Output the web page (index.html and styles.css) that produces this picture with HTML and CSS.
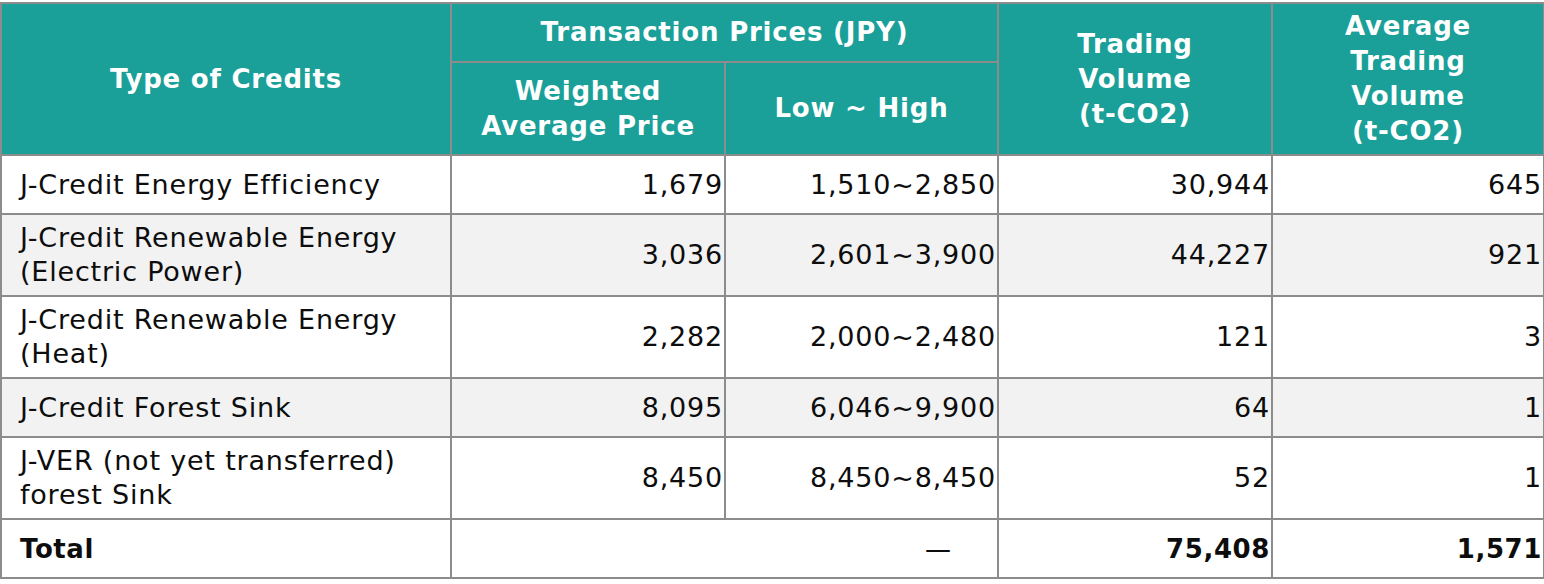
FILE: index.html
```html
<!DOCTYPE html>
<html>
<head>
<meta charset="utf-8">
<link rel="stylesheet" href="styles.css">
</head>
<body>
<table class="credits">
  <colgroup>
    <col class="c1"><col class="c2"><col class="c3"><col class="c4"><col class="c5">
  </colgroup>
  <thead>
    <tr class="h1">
      <th rowspan="2">Type of Credits</th>
      <th colspan="2">Transaction Prices (JPY)</th>
      <th rowspan="2">Trading<br>Volume<br>(t-CO2)</th>
      <th rowspan="2">Average<br>Trading<br>Volume<br>(t-CO2)</th>
    </tr>
    <tr class="h2">
      <th>Weighted<br>Average Price</th>
      <th>Low ~ High</th>
    </tr>
  </thead>
  <tbody>
    <tr class="one">
      <td class="name">J-Credit Energy Efficiency</td>
      <td>1,679</td><td>1,510~2,850</td><td>30,944</td><td>645</td>
    </tr>
    <tr class="two alt">
      <td class="name">J-Credit Renewable Energy<br>(Electric Power)</td>
      <td>3,036</td><td>2,601~3,900</td><td>44,227</td><td>921</td>
    </tr>
    <tr class="two">
      <td class="name">J-Credit Renewable Energy<br>(Heat)</td>
      <td>2,282</td><td>2,000~2,480</td><td>121</td><td>3</td>
    </tr>
    <tr class="one alt">
      <td class="name">J-Credit Forest Sink</td>
      <td>8,095</td><td>6,046~9,900</td><td>64</td><td>1</td>
    </tr>
    <tr class="two">
      <td class="name">J-VER (not yet transferred)<br>forest Sink</td>
      <td>8,450</td><td>8,450~8,450</td><td>52</td><td>1</td>
    </tr>
    <tr class="one total">
      <td class="name">Total</td>
      <td colspan="2" class="dash">—</td><td>75,408</td><td>1,571</td>
    </tr>
  </tbody>
</table>
</body>
</html>
```
FILE: styles.css
```css
html, body {
  margin: 0;
  padding: 0;
  background: #ffffff;
}
body {
  padding-top: 2px;
}
.credits {
  width: 1543px;
  table-layout: fixed;
  border-collapse: collapse;
  font-family: "DejaVu Sans", Verdana, sans-serif;
  font-size: 27px;
  letter-spacing: 0.8px;
  color: #0d0d0d;
}
.c1 { width: 450px; }
.c2 { width: 274px; }
.c3 { width: 273px; }
.c4 { width: 274px; }
.c5 { width: 272px; }
.credits th,
.credits td {
  border: 2px solid #8c8c8c;
  padding: 0 2px;
  vertical-align: middle;
}
.credits th {
  background: #1aa098;
  color: #ffffff;
  font-weight: bold;
  font-size: 26px;
  letter-spacing: 0.8px;
  line-height: 35px;
  text-align: center;
}
.h1 { height: 59px; }
.h2 { height: 93px; }
.credits td {
  text-align: right;
  line-height: 34px;
  padding-right: 1px;
}
.credits td.name {
  text-align: left;
  padding-left: 18px;
}
.one { height: 59px; }
.two { height: 82px; }
.alt td { background: #f2f2f2; }
.total td {
  font-weight: bold;
  font-size: 26px;
  letter-spacing: 0.6px;
}
.total td.dash {
  font-weight: normal;
  letter-spacing: 0;
  padding-right: 46px;
}
```
